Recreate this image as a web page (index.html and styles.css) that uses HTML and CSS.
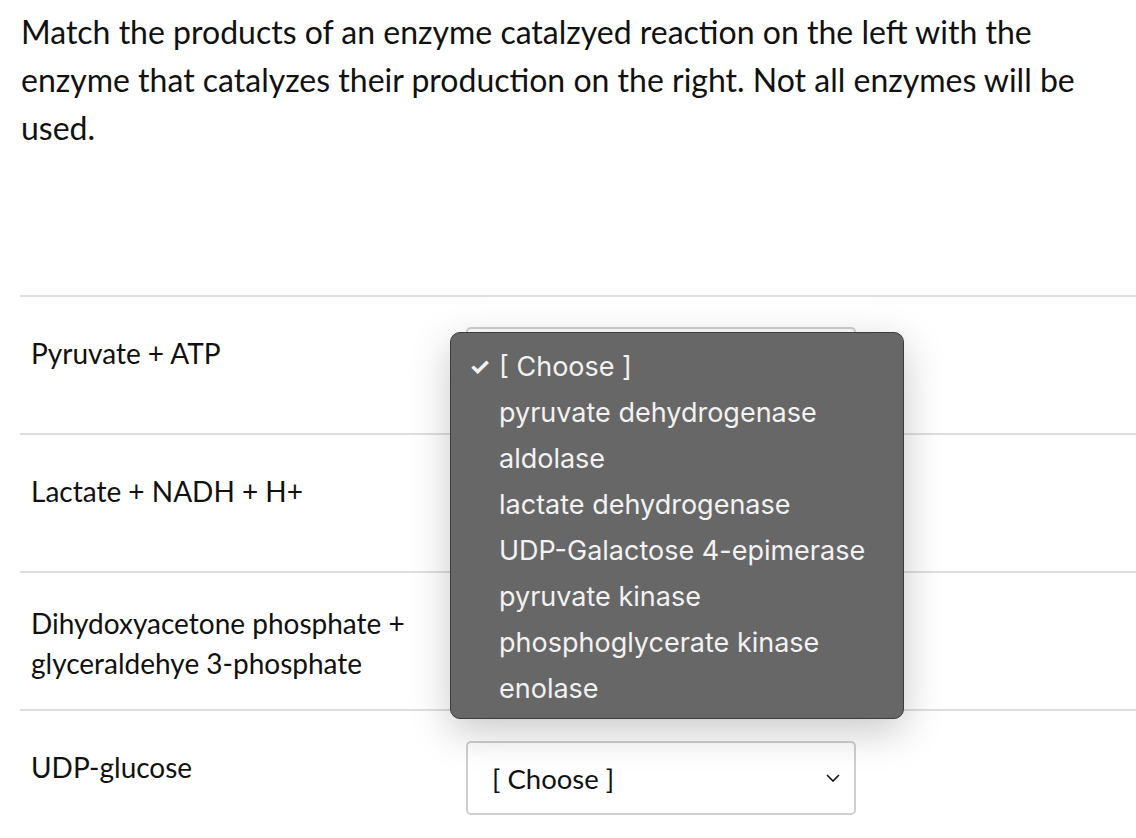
FILE: index.html
```html
<!DOCTYPE html>
<html lang="en">
<head>
  <meta charset="UTF-8" />
  <meta name="viewport" content="width=device-width, initial-scale=1.0"/>
  <title>Matching Question</title>
  <link rel="stylesheet" href="styles.css">
</head>
<body>
  <div class="question">
    <p class="prompt">Match the products of an enzyme catalzyed reaction on the left with the enzyme that catalyzes their production on the right. Not all enzymes will be used.</p>

    <div class="answers">
      <div class="row">
        <div class="label">Pyruvate + ATP</div>
        <div class="select">
          <span>[ Choose ]</span>
          <svg class="chevron" viewBox="0 0 14 8"><path d="M1 1l6 6 6-6"/></svg>
        </div>
      </div>
      <div class="row">
        <div class="label">Lactate + NADH + H+</div>
        <div class="select">
          <span>[ Choose ]</span>
          <svg class="chevron" viewBox="0 0 14 8"><path d="M1 1l6 6 6-6"/></svg>
        </div>
      </div>
      <div class="row">
        <div class="label label-multi">Dihydoxyacetone phosphate +<br>glyceraldehye 3-phosphate</div>
        <div class="select">
          <span>[ Choose ]</span>
          <svg class="chevron" viewBox="0 0 14 8"><path d="M1 1l6 6 6-6"/></svg>
        </div>
      </div>
      <div class="row">
        <div class="label">UDP-glucose</div>
        <div class="select">
          <span>[ Choose ]</span>
          <svg class="chevron" viewBox="0 0 14 8"><path d="M1 1l6 6 6-6"/></svg>
        </div>
      </div>
    </div>
  </div>

  <!-- open options menu for the first select -->
  <ul class="menu">
    <li class="is-selected"><span class="check">✓</span>[ Choose ]</li>
    <li>pyruvate dehydrogenase</li>
    <li>aldolase</li>
    <li>lactate dehydrogenase</li>
    <li>UDP-Galactose 4-epimerase</li>
    <li>pyruvate kinase</li>
    <li>phosphoglycerate kinase</li>
    <li>enolase</li>
  </ul>
</body>
</html>
```

FILE: styles.css
```css
* {
  margin: 0; padding: 0; box-sizing: border-box;
}
body {
  font-family: 'Lato', 'Liberation Sans', sans-serif;
  background: #fff;
  color: #111;
  height: 100vh;
  overflow: hidden;
}
.question {
  padding: 8px 0 0 20px;
}
.prompt {
  font-size: 32px;
  line-height: 48px;
  padding-left: 1px;
  width: 1080px;
}
.answers {
  margin-top: 143px;
}
.row {
  display: flex;
  align-items: flex-start;
  height: 138px;
  border-top: 2px solid #dedede;
  padding: 30px 0 32px 11px;
}
.label {
  width: 435px;
  font-size: 28px;
  line-height: 40px;
  padding-top: 6px;
}
.label-multi {
  padding-top: 0;
}
.select {
  width: 390px;
  height: 74px;
  border: 2px solid #cfcfcf;
  border-radius: 5px;
  display: flex;
  align-items: center;
  justify-content: space-between;
  padding: 0 14px 0 24px;
  font-size: 27.5px;
  color: #111;
}
.chevron {
  width: 14px;
  height: 8px;
  fill: none;
  stroke: #111;
  stroke-width: 1.6;
}
.menu {
  position: absolute;
  left: 450px;
  top: 332px;
  width: 454px;
  height: 387px;
  list-style: none;
  background: #676767;
  border: 1px solid #3c3c3c;
  border-radius: 10px;
  padding: 11px 0 8px;
  box-shadow: 0 12px 40px rgba(0, 0, 0, 0.22);
  font-family: 'Inter', 'Noto Sans', sans-serif;
  font-size: 27px;
  color: #f2f2f2;
}
.menu li {
  height: 46px;
  line-height: 46px;
  padding-left: 48px;
  position: relative;
  white-space: nowrap;
}
.check {
  position: absolute;
  left: 18px;
  font-size: 24px;
  font-weight: 700;
}
```
